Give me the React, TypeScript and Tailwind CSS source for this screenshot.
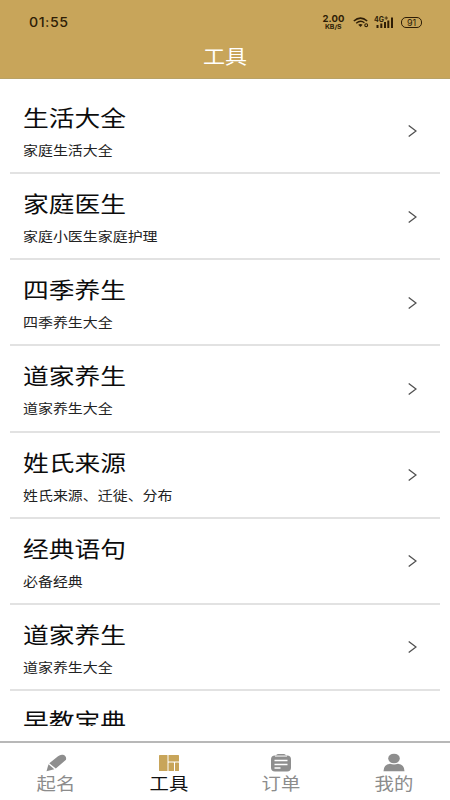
import type { ReactNode } from 'react'

const tools = [
  { title: '生活大全', desc: '家庭生活大全' },
  { title: '家庭医生', desc: '家庭小医生家庭护理' },
  { title: '四季养生', desc: '四季养生大全' },
  { title: '道家养生', desc: '道家养生大全' },
  { title: '姓氏来源', desc: '姓氏来源、迁徙、分布' },
  { title: '经典语句', desc: '必备经典' },
  { title: '道家养生', desc: '道家养生大全' },
  { title: '早教宝典', desc: '' },
]

function StatusBar() {
  return (
    <div className="flex h-[45px] items-center justify-between pl-[28.5px] pr-[28px] text-[#2e1d06] font-['Inter',sans-serif]">
      <span className="origin-left scale-x-[1.09] text-[13px] font-medium tracking-[0.5px]">01:55</span>
      <div className="flex items-center">
        <div className="flex w-[21px] flex-col items-center font-bold">
          <span className="text-[9.5px] leading-[8px] tracking-[0.1px]">2.00</span>
          <span className="scale-x-[1.15] text-[6px] leading-[8px]">KB/S</span>
        </div>
        <svg className="ml-[9px]" width="16" height="11" viewBox="0 0 16 11" fill="none" stroke="currentColor">
          <path d="M.8 4Q7.5-1.8 14.2 4" strokeWidth="1.5" />
          <path d="M3.2 6.3Q7.5 2.6 11.4 5.8" strokeWidth="1.4" />
          <path d="M5.2 7.8Q7.5 6 9.6 7.8L7.5 10Z" fill="currentColor" stroke="none" />
          <circle cx="13.2" cy="8.2" r="1.4" strokeWidth="1.1" />
        </svg>
        <svg className="ml-[5px]" width="20" height="13" viewBox="0 0 20 13" fill="currentColor">
          <text x="0" y="6" fontSize="7" fontWeight="700">4G</text>
          <path d="M10.5 2H14M12.2.3v3.5" stroke="currentColor" strokeWidth=".8" />
          <rect x="2.5" y="9" width="2" height="3" />
          <rect x="6.3" y="7.5" width="2" height="4.5" />
          <rect x="10" y="6" width="2" height="6" />
          <rect x="13.3" y="4.5" width="2" height="7.5" />
          <rect x="17" y="1.5" width="2" height="10.5" />
        </svg>
        <div className="ml-[7px] flex h-[11px] w-[21px] items-center justify-center rounded-[5px] border border-current text-[9px] leading-none">
          91
        </div>
      </div>
    </div>
  )
}

function Tab({ label, active, children }: { label: string; active?: boolean; children: ReactNode }) {
  return (
    <div className={`flex flex-1 flex-col items-center pt-[10px] ${active ? 'text-[#111111]' : 'text-[#8c8c8c]'}`}>
      <svg width="22" height="20" viewBox="0 0 22 20" fill={active ? '#c8a55a' : '#8e8e8e'}>
        {children}
      </svg>
      <span className="-mt-[2px] scale-x-[1.14] text-[17px] leading-[24px]">{label}</span>
    </div>
  )
}

export default function App() {
  return (
    <div className="flex h-[800px] w-[450px] flex-col overflow-hidden bg-white font-['Noto_Sans_CJK_SC',sans-serif]">
      {/* Header */}
      <div className="h-[79px] shrink-0 border-b border-[#b9a265] bg-[#c8a55a]">
        <StatusBar />
        <h1 className="-mt-px scale-x-[1.16] text-center text-[19px] leading-[24px] text-white">工具</h1>
      </div>

      {/* Lista */}
      <div className="h-[647px] shrink-0 overflow-hidden px-[10px] pt-[9px]">
        {tools.map((tool, i) => (
          <div key={i} className="flex h-[86.13px] items-center justify-between border-b-2 border-[#e2e2e2] pl-[13px] pr-[23px]">
            <div className="h-full">
              <div className="origin-left scale-x-[1.17] pt-[12px] text-[22px] leading-[32px] text-[#0c0c0c]">{tool.title}</div>
              <div className="origin-left scale-x-[1.15] pt-[8px] text-[13px] leading-[20px] text-[#222222]">{tool.desc}</div>
            </div>
            <svg className="mt-px" width="9" height="12" viewBox="0 0 9 12" fill="none" stroke="#505050" strokeWidth="1.3">
              <path d="M.7.5 8 6 .7 11.5" />
            </svg>
          </div>
        ))}
      </div>

      {/* Tabs */}
      <div className="mt-[15px] flex h-[59px] shrink-0 border-t-2 border-[#b8b8b8]">
        <Tab label="起名">
          <path d="M1.5 18.3 3.5 11.3 9.3 16.3Z" />
          <path d="M4.3 10.2 13 3.2Q15.3 1.3 18 1.8 21.8 3 21 6.8L10.8 15.5Z" />
        </Tab>
        <Tab label="工具" active>
          <rect x="1" y="2" width="8.5" height="16" rx="0.6" />
          <rect x="10.5" y="2" width="10.5" height="6.5" rx="0.6" />
          <rect x="10.5" y="9.5" width="5.5" height="8.5" rx="0.6" />
          <rect x="17" y="9.5" width="4" height="8.5" rx="0.6" />
        </Tab>
        <Tab label="订单">
          <path d="M6 2.5Q6.5 1 8 1h6q1.5 0 2 1.5Z" />
          <rect x="1" y="2.5" width="20" height="16" rx="4" />
          <path d="M5 3.2h12" stroke="#fff" strokeWidth=".8" />
          <path d="M4.5 7.5h13M4.5 11.5h13M4.5 15h6" stroke="#fff" strokeWidth="1.3" />
        </Tab>
        <Tab label="我的">
          <ellipse cx="11" cy="5.5" rx="5.8" ry="4.8" />
          <path d="M.5 18.3Q.5 11.5 7 10.7q4 1.5 8 0 6.5.8 6.5 7.6Z" />
        </Tab>
      </div>
    </div>
  )
}
